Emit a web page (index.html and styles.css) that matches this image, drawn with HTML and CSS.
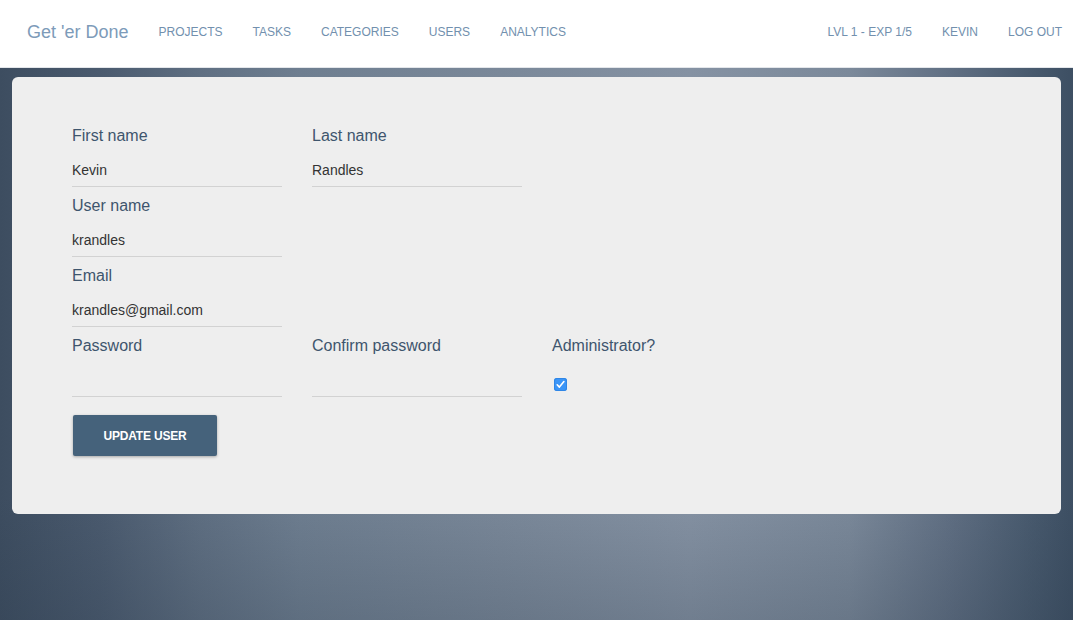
FILE: index.html
```html
<!DOCTYPE html>
<html>
<head>
<meta charset="utf-8">
<title>Get 'er Done</title>
<link rel="stylesheet" href="styles.css">
</head>
<body>
<nav class="navbar">
  <a class="brand" href="#">Get 'er Done</a>
  <ul class="nav-links">
    <li><a href="#">PROJECTS</a></li>
    <li><a href="#">TASKS</a></li>
    <li><a href="#">CATEGORIES</a></li>
    <li><a href="#">USERS</a></li>
    <li><a href="#">ANALYTICS</a></li>
  </ul>
  <ul class="nav-links nav-right">
    <li><a href="#">LVL 1 - EXP 1/5</a></li>
    <li><a href="#">KEVIN</a></li>
    <li><a href="#">LOG OUT</a></li>
  </ul>
</nav>
<main class="card">
  <form class="user-form">
    <div class="row">
      <div class="field">
        <label>First name</label>
        <input class="text-input" type="text" value="Kevin">
      </div>
      <div class="field">
        <label>Last name</label>
        <input class="text-input" type="text" value="Randles">
      </div>
    </div>
    <div class="row">
      <div class="field">
        <label>User name</label>
        <input class="text-input" type="text" value="krandles">
      </div>
    </div>
    <div class="row">
      <div class="field">
        <label>Email</label>
        <input class="text-input" type="text" value="krandles@gmail.com">
      </div>
    </div>
    <div class="row">
      <div class="field">
        <label>Password</label>
        <input class="text-input" type="password" value="">
      </div>
      <div class="field">
        <label>Confirm password</label>
        <input class="text-input" type="password" value="">
      </div>
      <div class="field">
        <label>Administrator?</label>
        <span class="checkbox"><svg width="13" height="13" viewBox="0 0 13 13"><path d="M3.2 6.8 L5.4 9.1 L9.9 3.6" fill="none" stroke="#fff" stroke-width="1.6" stroke-linecap="round" stroke-linejoin="round"/></svg></span>
      </div>
    </div>
    <button class="btn" type="button">UPDATE USER</button>
  </form>
</main>
</body>
</html>
```
FILE: styles.css
```css
html, body {
  margin: 0;
  padding: 0;
}
body {
  height: 620px;
  overflow: hidden;
  font-family: "Liberation Sans", Arial, sans-serif;
  background:
    linear-gradient(to bottom, rgba(40, 55, 72, 0) 80%, rgba(40, 55, 72, 0.22) 100%),
    linear-gradient(to right, #3d4d60 0px, #4a5a6e 100px, #5f6f82 200px, #6e7e90 300px, #7a8899 500px, #8592a3 690px, #7b899a 850px, #606f83 950px, #485a6e 1030px, #3d4f63 1073px);
  background-color: #3c4c5f;
}
.navbar {
  height: 63px;
  padding: 0 11px 4px 27px;
  background: #fff;
  border-bottom: 1px solid #e3e6ea;
  display: flex;
  align-items: center;
  box-sizing: content-box;
}
.brand {
  font-size: 18px;
  color: #7d9bb9;
  text-decoration: none;
  margin-right: 30px;
  line-height: 20px;
}
.nav-links {
  list-style: none;
  margin: 0;
  padding: 0;
  display: flex;
  gap: 30px;
}
.nav-links a {
  font-size: 12px;
  color: #7290ae;
  text-decoration: none;
  line-height: 20px;
}
.nav-right {
  margin-left: auto;
}
.card {
  margin: 9px 12px 0;
  height: 437px;
  box-sizing: border-box;
  background: #eeeeee;
  border-radius: 6px;
  padding: 48px 60px 0;
}
.user-form {
  display: flex;
  flex-direction: column;
}
.row {
  display: flex;
  gap: 30px;
  height: 70px;
}
.field {
  width: 210px;
  display: flex;
  flex-direction: column;
}
.field label {
  font-size: 16px;
  line-height: 22px;
  color: #3e556d;
}
.text-input {
  display: block;
  box-sizing: border-box;
  width: 210px;
  height: 40px;
  margin: 0;
  padding: 10px 0 4px;
  border: none;
  border-bottom: 1px solid #d2d2d2;
  background: transparent;
  font-family: "Liberation Sans", Arial, sans-serif;
  font-size: 14px;
  color: #333;
  outline: none;
}
.checkbox {
  display: flex;
  width: 13px;
  height: 13px;
  margin: 21px 0 0 2px;
  background: #3b95f7;
  border-radius: 3px;
  box-shadow: inset 0 0 0 1px #2f86e6;
}
.btn {
  align-self: flex-start;
  margin: 10px 0 0 1px;
  width: 144px;
  height: 41px;
  border: none;
  border-radius: 2px;
  background: #45627b;
  color: #fff;
  font-family: "Liberation Sans", Arial, sans-serif;
  font-size: 12px;
  font-weight: bold;
  letter-spacing: -0.2px;
  box-shadow: 0 1px 3px rgba(0, 0, 0, 0.3);
  cursor: pointer;
}
```
